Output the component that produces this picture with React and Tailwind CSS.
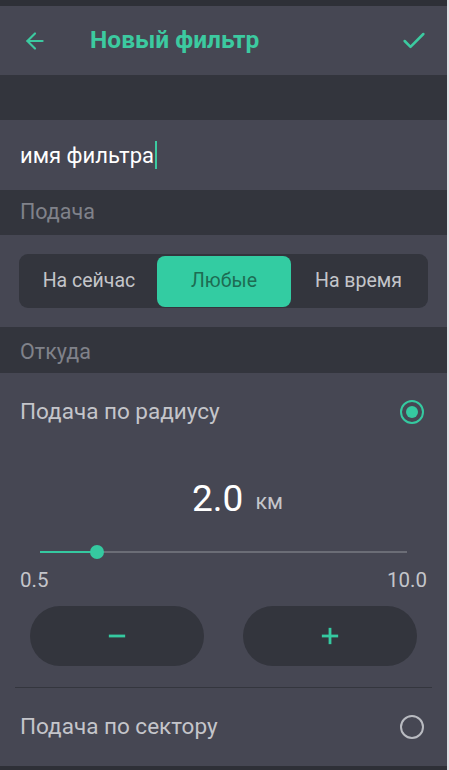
import { ArrowLeft, Check, Minus, Plus } from 'lucide-react';

const Radio = ({ checked }) => (
  <div className={`w-6 h-6 rounded-full border-2 flex items-center justify-center ${checked ? 'border-[#35c9a0]' : 'border-[#b9bbc1]'}`}>
    {checked && <div className="w-3 h-3 rounded-full bg-[#35c9a0]" />}
  </div>
);

export default function App() {
  return (
    <div className="w-[449px] h-[770px] overflow-hidden bg-[#33353d] border-r-2 border-[#dfe0e4] font-['Roboto',sans-serif] flex flex-col">
      <div className="h-[6px] bg-[#2e3037]" />

      {/* Header */}
      <div className="h-[69px] bg-[#464753] flex items-center px-[22px]">
        <ArrowLeft className="w-[26px] h-[26px] text-[#3ccaa0]" strokeWidth={2} />
        <h1 className="ml-[42px] text-[24.5px] font-bold text-[#3ccaa0]">Новый фильтр</h1>
        <Check className="ml-auto mr-[-3px] w-[28px] h-[28px] text-[#3ccaa0]" strokeWidth={2.2} />
      </div>

      <div className="h-[45px] bg-[#33353d]" />

      {/* Name input */}
      <div className="h-[70px] bg-[#464753] flex items-center px-[20px]">
        <span className="text-[22px] text-white">имя фильтра</span>
        <span className="w-[2px] h-[28px] bg-[#3ccaa0] ml-[1px]" />
      </div>

      {/* Подача */}
      <div className="h-[45px] flex items-center px-[20px] text-[21.5px] text-[#80828a]">Подача</div>

      <div className="h-[92px] bg-[#464753] flex items-center px-[19px]">
        <div className="flex-1 h-[54px] rounded-[9px] bg-[#33353d] flex items-center p-[2px] text-[19.5px]">
          <div className="w-[136px] text-center text-[#c4c5ca]">На сейчас</div>
          <div className="w-[134px] h-[51px] rounded-[8px] bg-[#33cca2] flex items-center justify-center text-[#1d6c53]">Любые</div>
          <div className="flex-1 text-center text-[#c4c5ca]">На время</div>
        </div>
      </div>

      {/* Откуда */}
      <div className="h-[46px] flex items-center px-[20px] pt-[4px] text-[21.5px] text-[#80828a]">Откуда</div>

      <div className="bg-[#464753] flex flex-col">
        <div className="h-[78px] flex items-center justify-between pl-[20px] pr-[23px]">
          <span className="text-[22.5px] text-[#c4c5ca]">Подача по радиусу</span>
          <Radio checked />
        </div>

        <div className="h-[95px] flex items-center justify-center pl-[28px]">
          <span className="text-[37px] text-white">2.0</span>
          <span className="ml-[12px] mt-[8px] text-[21.5px] text-[#c4c5ca]">км</span>
        </div>

        <div className="relative mx-[40px] h-[12px] flex items-center">
          <div className="w-full h-[2px] bg-[#6b6d76]" />
          <div className="absolute left-0 w-[57px] h-[2px] bg-[#35c9a0]" />
          <div className="absolute left-[50px] w-[14px] h-[14px] rounded-full bg-[#35c9a0]" />
        </div>

        <div className="flex justify-between px-[20px] mt-[12px] text-[20.5px] text-[#c4c5ca] leading-none">
          <span>0.5</span>
          <span>10.0</span>
        </div>

        <div className="flex justify-between px-[30px] mt-[15px]">
          <button className="w-[174px] h-[60px] rounded-full bg-[#33353d] text-[#35c9a0] flex items-center justify-center">
            <Minus className="w-[28px] h-[28px]" strokeWidth={2.4} strokeLinecap="butt" />
          </button>
          <button className="w-[174px] h-[60px] rounded-full bg-[#33353d] text-[#35c9a0] flex items-center justify-center">
            <Plus className="w-[28px] h-[28px]" strokeWidth={2.4} strokeLinecap="butt" />
          </button>
        </div>

        <div className="mx-[15px] mt-[21px] h-[1px] bg-[#34363e]" />

        <div className="h-[78px] flex items-center justify-between pl-[20px] pr-[23px]">
          <span className="text-[22.5px] text-[#c4c5ca]">Подача по сектору</span>
          <Radio />
        </div>
      </div>

      <div className="flex-1 bg-[#2e3037]" />
    </div>
  );
}
